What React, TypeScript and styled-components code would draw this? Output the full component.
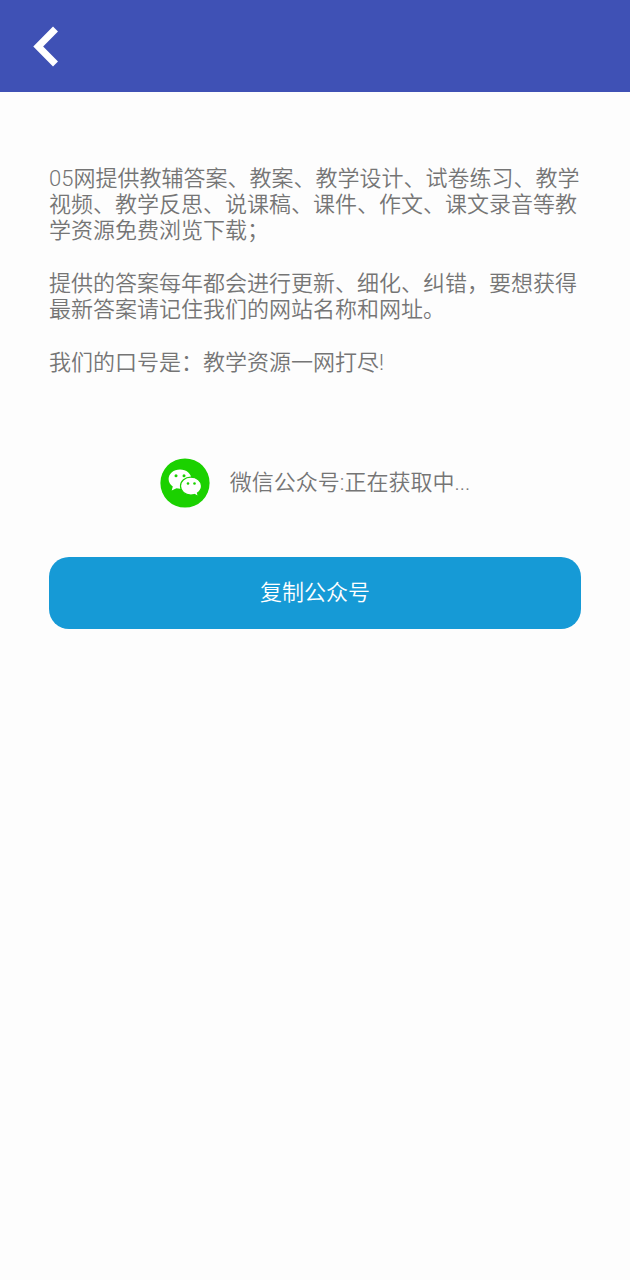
import React from 'react';
import styled, { createGlobalStyle } from 'styled-components';

const GlobalStyle = createGlobalStyle`
  * { box-sizing: border-box; }
  body {
    margin: 0;
    background: #fdfdfd;
    color: #757575;
    font-family: Roboto, 'Noto Sans CJK SC', sans-serif;
    font-size: 22px;
    font-weight: 350;
    line-height: 26px;
  }
`;

const TopBar = styled.header`
  display: flex;
  align-items: center;
  height: 92px;
  padding: 0 24px;
  background: #3f51b5;
`;

const BackButton = styled.button`
  display: flex;
  padding: 0;
  border: 0;
  background: none;
  cursor: pointer;
`;

const Content = styled.main`
  display: flex;
  flex-direction: column;
  padding: 74px 49px 48px;
`;

const Intro = styled.section`
  display: flex;
  flex-direction: column;
  gap: 27px;
`;

const Paragraph = styled.p`
  margin: 0;
`;

const AccountRow = styled.div`
  display: flex;
  align-items: center;
  justify-content: center;
  gap: 20px;
  margin: 82px 0 49px;
`;

const CopyButton = styled.button`
  height: 72px;
  padding: 0;
  border: 0;
  border-radius: 20px;
  background: #169ad6;
  color: #fff;
  font: inherit;
  cursor: pointer;
`;

const BackIcon = () => (
  <svg width="44" height="44" viewBox="0 0 44 44" fill="none" aria-hidden="true">
    <path d="M31.500 5 14.200 22.500 31.500 40" stroke="#fff" strokeWidth="7" />
  </svg>
);

const WeChatIcon = () => (
  <svg width="50" height="50" viewBox="0 0 50 50" aria-hidden="true">
    <circle cx="25" cy="25" r="24.6" fill="#1bd100" />
    <path
      fill="#fff"
      d="M20 11.500C13.600 11.500 8.600 15.700 8.600 21.100c0 3.100 1.600 5.700 4.200 7.400L11.700 32.600l4.800-2.400c1.200.300 2.300.500 3.500.5 6.400 0 11.400-4.200 11.400-9.600S26.400 11.500 20 11.500z"
    />
    <path
      fill="#fff"
      stroke="#1bd100"
      strokeWidth="1.200"
      d="M30.900 19.200c-5.900 0-10.400 4-10.400 8.900s4.500 8.900 10.400 8.900c1.300 0 2.500-.200 3.600-.5l4 2.300-1-3.700c2.500-1.700 4-4.200 4-7 0-4.900-4.700-8.900-10.600-8.900z"
    />
    <g fill="#1bd100">
      <circle cx="16" cy="17.700" r="1.500" />
      <circle cx="24" cy="17.700" r="1.500" />
      <circle cx="28" cy="25.500" r="1.300" />
      <circle cx="34.500" cy="25.500" r="1.300" />
    </g>
  </svg>
);

export default function App() {
  return (
    <div lang="zh-CN">
      <GlobalStyle />
      <TopBar>
        <BackButton type="button" aria-label="返回">
          <BackIcon />
        </BackButton>
      </TopBar>
      <Content>
        <Intro>
          <Paragraph>
            05网提供教辅答案、教案、教学设计、试卷练习、教学视频、教学反思、说课稿、课件、作文、课文录音等教学资源免费浏览下载；
          </Paragraph>
          <Paragraph>
            提供的答案每年都会进行更新、细化、纠错，要想获得最新答案请记住我们的网站名称和网址。
          </Paragraph>
          <Paragraph>我们的口号是：教学资源一网打尽!</Paragraph>
        </Intro>
        <AccountRow>
          <WeChatIcon />
          <span>微信公众号:正在获取中...</span>
        </AccountRow>
        <CopyButton type="button">复制公众号</CopyButton>
      </Content>
    </div>
  );
}
